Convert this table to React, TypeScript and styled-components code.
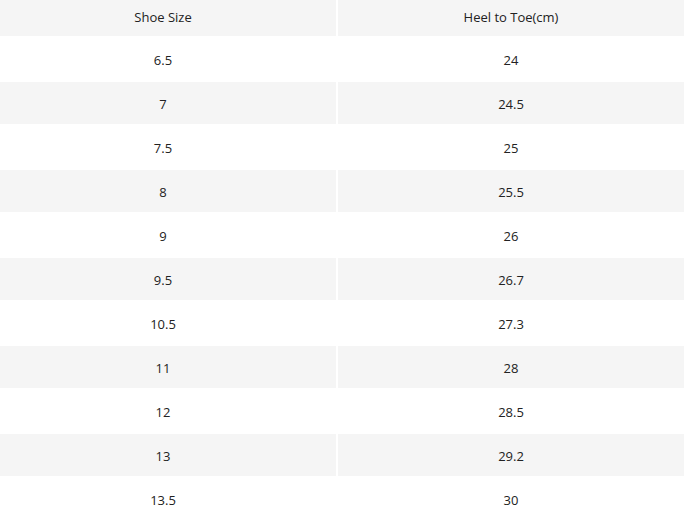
import React from "react";
import styled, { createGlobalStyle } from "styled-components";

const Global = createGlobalStyle`
  html, body { margin: 0; padding: 0; background: #ffffff; overflow: hidden; }
  body { font-family: "Open Sans", "Noto Sans", sans-serif; }
`;

const Wrapper = styled.div`
  width: 688px;
  height: 517px;
  overflow: hidden;
`;

const Table = styled.table`
  border-collapse: separate;
  border-spacing: 2px;
  width: 698px;
  margin: -2px 0 0 -12px;
  table-layout: fixed;
  font-size: 13px;
  color: #222222;
`;

const HeadCell = styled.th`
  background: #f5f5f5;
  height: 36px;
  padding: 0 0 3px 0;
  box-sizing: border-box;
  font-weight: 400;
  text-align: center;
  vertical-align: middle;
`;

const Row = styled.tr<{ $striped: boolean }>`
  background: transparent;
  & > td {
    background: ${(p) => (p.$striped ? "#f5f5f5" : "#ffffff")};
  }
`;

const Cell = styled.td`
  height: 42px;
  padding: 2px 0 0 0;
  box-sizing: border-box;
  text-align: center;
  vertical-align: middle;
`;

const rows: [string, string][] = [
  ["6.5", "24"],
  ["7", "24.5"],
  ["7.5", "25"],
  ["8", "25.5"],
  ["9", "26"],
  ["9.5", "26.7"],
  ["10.5", "27.3"],
  ["11", "28"],
  ["12", "28.5"],
  ["13", "29.2"],
  ["13.5", "30"],
];

export default function App() {
  return (
    <Wrapper>
      <Global />
      <Table>
        <thead>
          <tr>
            <HeadCell>Shoe Size</HeadCell>
            <HeadCell>Heel to Toe(cm)</HeadCell>
          </tr>
        </thead>
        <tbody>
          {rows.map(([size, len], i) => (
            <Row key={size} $striped={i % 2 === 1}>
              <Cell>{size}</Cell>
              <Cell>{len}</Cell>
            </Row>
          ))}
        </tbody>
      </Table>
    </Wrapper>
  );
}
